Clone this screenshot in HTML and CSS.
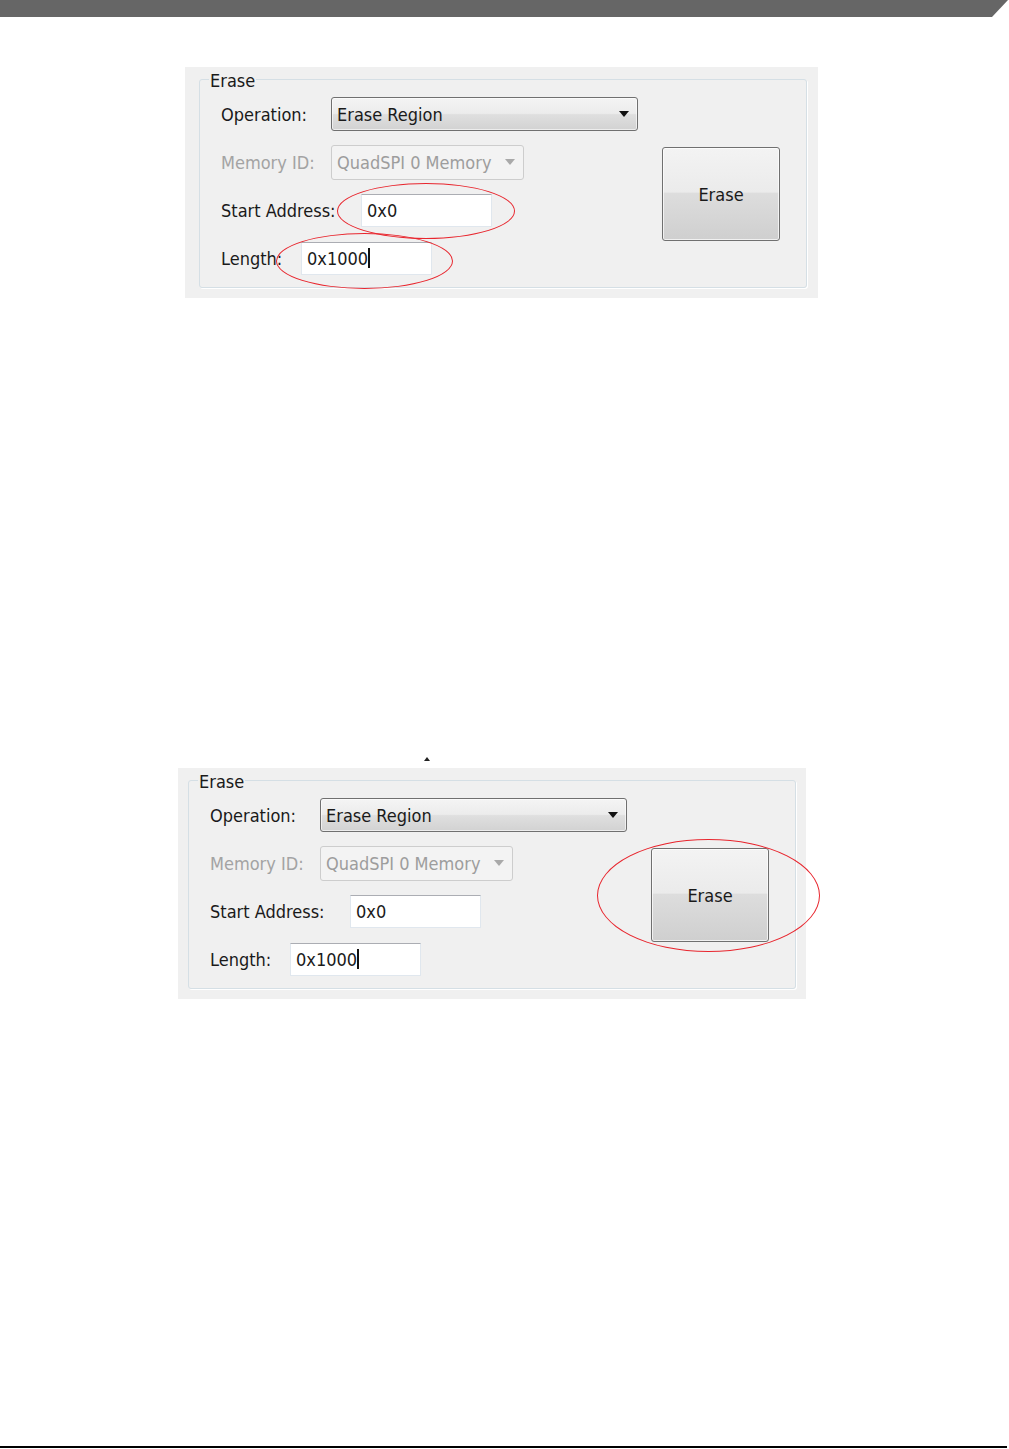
FILE: index.html
```html
<!DOCTYPE html>
<html lang="en">
<head>
  <meta charset="UTF-8" />
  <title>Erase</title>
  <meta name="viewport" content="width=device-width, initial-scale=1.0" />
  <link rel="stylesheet" href="styles.css">
</head>
<body>

  <header class="topbar"></header>

  <main class="page">

    <!-- first shot: start address + length marked -->
    <section class="panel panel-first">
      <fieldset class="group">
        <legend>Erase</legend>
        <div class="group-body">
          <div class="form">
            <div class="row">
              <span class="lbl lbl-op">Operation:</span>
              <div class="combo combo-op">
                <span>Erase Region</span>
                <svg class="arrow" width="10" height="6" viewBox="0 0 10 6"><path d="M0 0h10L5 6z" fill="#111"/></svg>
              </div>
            </div>
            <div class="row">
              <span class="lbl lbl-op lbl-off">Memory ID:</span>
              <div class="combo combo-off">
                <span>QuadSPI 0 Memory</span>
                <svg class="arrow" width="10" height="6" viewBox="0 0 10 6"><path d="M0 0h10L5 6z" fill="#a9a9a9"/></svg>
              </div>
            </div>
            <div class="row">
              <span class="lbl lbl-start">Start Address:</span>
              <div class="field">0x0</div>
            </div>
            <div class="row">
              <span class="lbl lbl-len">Length:</span>
              <div class="field">0x1000<i class="caret"></i></div>
            </div>
          </div>
          <div class="side">
            <button class="btn">Erase</button>
          </div>
        </div>
      </fieldset>
      <span class="ring ring-start"></span>
      <span class="ring ring-length"></span>
    </section>

    <div class="speck">
      <svg width="6" height="4" viewBox="0 0 6 4"><path d="M0 4L3 0l3 4z" fill="#222"/></svg>
    </div>

    <!-- second shot: button marked -->
    <section class="panel panel-second">
      <fieldset class="group">
        <legend>Erase</legend>
        <div class="group-body">
          <div class="form">
            <div class="row">
              <span class="lbl lbl-op">Operation:</span>
              <div class="combo combo-op">
                <span>Erase Region</span>
                <svg class="arrow" width="10" height="6" viewBox="0 0 10 6"><path d="M0 0h10L5 6z" fill="#111"/></svg>
              </div>
            </div>
            <div class="row">
              <span class="lbl lbl-op lbl-off">Memory ID:</span>
              <div class="combo combo-off">
                <span>QuadSPI 0 Memory</span>
                <svg class="arrow" width="10" height="6" viewBox="0 0 10 6"><path d="M0 0h10L5 6z" fill="#a9a9a9"/></svg>
              </div>
            </div>
            <div class="row">
              <span class="lbl lbl-start">Start Address:</span>
              <div class="field">0x0</div>
            </div>
            <div class="row">
              <span class="lbl lbl-len">Length:</span>
              <div class="field">0x1000<i class="caret"></i></div>
            </div>
          </div>
          <div class="side">
            <button class="btn">Erase</button>
          </div>
        </div>
      </fieldset>
      <span class="ring ring-button"></span>
    </section>

  </main>

  <footer class="rule"></footer>

</body>
</html>
```

FILE: styles.css
```css
body {
  margin: 0;
  min-height: 100vh;
  display: flex;
  flex-direction: column;
  background: #fff;
  color: #1a1a1a;
  font-family: "DejaVu Sans Condensed", "DejaVu Sans", sans-serif;
  font-stretch: condensed;
  font-size: 18px;
}

.topbar {
  height: 17px;
  background: #666;
  clip-path: polygon(0 0, 1008px 0, 992px 100%, 0 100%);
}

.page {
  display: flex;
  flex-direction: column;
}

/* window crop */
.panel {
  position: relative;
  align-self: flex-start;
  background: #f0f0f0;
  padding: 2px 11px 10px 14px;
}

.panel-first {
  margin: 50px 0 0 185px;
}

.panel-second {
  margin: 9px 0 0 178px;
  padding-left: 10px;
  padding-right: 10px;
}

.group {
  width: 608px;
  box-sizing: border-box;
  margin: 0;
  padding: 0 26px 12px 21px;
  border: 1px solid #d5dfe5;
  border-radius: 3px;
  box-shadow: 1px 1px 0 #fff;
}

.group legend {
  margin-left: -12px;
  padding: 0 1px;
  line-height: 21px;
  position: relative;
  top: 1px;
}

.group-body {
  margin-top: 7px;
  display: flex;
}

.form {
  width: 417px;
  display: flex;
  flex-direction: column;
  gap: 14px;
}

.row {
  height: 34px;
  display: flex;
  align-items: center;
}

.lbl { flex: none; }
.lbl-op { width: 110px; }
.lbl-start { width: 140px; }
.lbl-len { width: 80px; }
.lbl-off { color: #a3a3a3; }

.combo {
  height: 34px;
  box-sizing: border-box;
  display: flex;
  align-items: center;
  justify-content: space-between;
  padding: 0 8px 0 5px;
  border-radius: 3px;
}

.combo-op {
  width: 307px;
  border: 1px solid #707070;
  background: linear-gradient(#f4f4f4, #ececec 48%, #dfdfdf 52%, #d2d2d2);
  box-shadow: inset 0 0 0 1px rgba(255, 255, 255, 0.6);
}

.combo-off {
  width: 193px;
  height: 35px;
  color: #9d9d9d;
  border: 1px solid #cdcdcd;
  background: #f3f3f3;
}

.field {
  width: 131px;
  height: 33px;
  box-sizing: border-box;
  display: flex;
  align-items: center;
  padding-left: 5px;
  background: #fff;
  border: 1px solid #e0e7ee;
  border-top-color: #abadb3;
}

.caret {
  width: 1.5px;
  height: 20px;
  background: #111;
}

.side {
  margin-left: 24px;
  padding-top: 50px;
}

.btn {
  width: 118px;
  height: 94px;
  font: inherit;
  color: #1a1a1a;
  border: 1px solid #707070;
  border-radius: 3px;
  background: linear-gradient(#f3f3f3, #ebebeb 48%, #dddddd 49%, #cfcfcf);
  box-shadow: inset 0 0 0 1px rgba(255, 255, 255, 0.7);
}

/* red markers drawn over the screenshot */
.ring {
  position: absolute;
  border: 1.5px solid #e8262e;
  border-radius: 50%;
}

.ring-start { left: 152px; top: 116px; width: 176px; height: 54px; }
.ring-length { left: 91px; top: 166px; width: 175px; height: 54px; }
.ring-button { left: 419px; top: 71px; width: 221px; height: 111px; }

.speck {
  height: 4px;
  margin: 457px 0 0 424px;
  line-height: 0;
}

.rule {
  margin-top: auto;
  margin-bottom: 1px;
  width: 1007px;
  height: 2px;
  background: #000;
}
```
